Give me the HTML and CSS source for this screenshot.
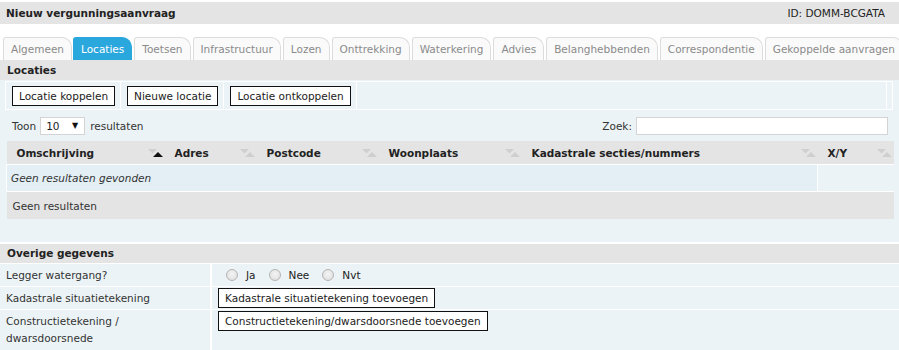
FILE: index.html
```html
<!DOCTYPE html>
<html>
<head>
<meta charset="utf-8">
<link rel="stylesheet" href="styles.css">
</head>
<body>
<div class="header">
  <span class="title">Nieuw vergunningsaanvraag</span>
  <span class="id">ID: DOMM-BCGATA</span>
</div>
<div class="tabs">
  <span class="tab">Algemeen</span>
  <span class="tab active">Locaties</span>
  <span class="tab">Toetsen</span>
  <span class="tab">Infrastructuur</span>
  <span class="tab">Lozen</span>
  <span class="tab">Onttrekking</span>
  <span class="tab">Waterkering</span>
  <span class="tab">Advies</span>
  <span class="tab">Belanghebbenden</span>
  <span class="tab">Correspondentie</span>
  <span class="tab">Gekoppelde aanvragen</span>
</div>
<div class="section-head">Locaties</div>
<div class="panel">
  <div class="btnrow">
    <div class="bcell"><span class="btn">Locatie koppelen</span></div>
    <div class="bcell"><span class="btn">Nieuwe locatie</span></div>
    <div class="bcell"><span class="btn">Locatie ontkoppelen</span></div>
    <div class="bcell grow"></div>
    <div class="bcell end"></div>
  </div>
  <div class="controls">
    <div class="toon">Toon <span class="select"><span>10</span><span class="arrow">&#9660;</span></span> resultaten</div>
    <div class="zoek">Zoek: <span class="input"></span></div>
  </div>
  <table class="grid">
    <thead>
      <tr>
        <th class="c1">Omschrijving<svg class="sort" width="16" height="8" viewBox="0 0 16 8"><polygon points="0,0 9,0 4.5,4.5" fill="#cfcfcf"/><polygon points="5,8 15,8 10,3" fill="#111"/></svg></th>
        <th class="c2">Adres<svg class="sort" width="16" height="8" viewBox="0 0 16 8"><polygon points="0,0 9,0 4.5,4.5" fill="#cfcfcf"/><polygon points="5,8 15,8 10,3" fill="#cfcfcf"/></svg></th>
        <th class="c3">Postcode<svg class="sort" width="16" height="8" viewBox="0 0 16 8"><polygon points="0,0 9,0 4.5,4.5" fill="#cfcfcf"/><polygon points="5,8 15,8 10,3" fill="#cfcfcf"/></svg></th>
        <th class="c4">Woonplaats<svg class="sort" width="16" height="8" viewBox="0 0 16 8"><polygon points="0,0 9,0 4.5,4.5" fill="#cfcfcf"/><polygon points="5,8 15,8 10,3" fill="#cfcfcf"/></svg></th>
        <th class="c5">Kadastrale secties/nummers<svg class="sort" width="16" height="8" viewBox="0 0 16 8"><polygon points="0,0 9,0 4.5,4.5" fill="#cfcfcf"/><polygon points="5,8 15,8 10,3" fill="#cfcfcf"/></svg></th>
        <th class="c6">X/Y<svg class="sort" width="16" height="8" viewBox="0 0 16 8"><polygon points="0,0 9,0 4.5,4.5" fill="#cfcfcf"/><polygon points="5,8 15,8 10,3" fill="#cfcfcf"/></svg></th>
      </tr>
    </thead>
    <tbody>
      <tr class="empty"><td colspan="5" class="emptycell">Geen resultaten gevonden</td><td class="blank"></td></tr>
      <tr class="foot"><td colspan="6">Geen resultaten</td></tr>
    </tbody>
  </table>
</div>
<div class="section-head overige">Overige gegevens</div>
<div class="form">
  <div class="frow">
    <div class="label">Legger watergang?</div>
    <div class="value radios">
      <span class="radio"></span><span class="rl">Ja</span>
      <span class="radio"></span><span class="rl">Nee</span>
      <span class="radio"></span><span class="rl">Nvt</span>
    </div>
  </div>
  <div class="frow">
    <div class="label">Kadastrale situatietekening</div>
    <div class="value"><span class="btn">Kadastrale situatietekening toevoegen</span></div>
  </div>
  <div class="frow tall">
    <div class="label">Constructietekening /<br>dwarsdoorsnede</div>
    <div class="value"><span class="btn">Constructietekening/dwarsdoorsnede toevoegen</span></div>
  </div>
</div>
</body>
</html>
```

FILE: styles.css
```css
html, body {
  margin: 0;
  padding: 0;
  background: #fff;
}
body {
  font-family: "DejaVu Sans", Verdana, sans-serif;
  font-size: 10.5px;
  color: #333;
  width: 899px;
  overflow: hidden;
}
.header {
  margin-top: 2px;
  height: 22px;
  background: #e4e4e4;
  display: flex;
  justify-content: space-between;
  align-items: center;
  padding: 0 14px 0 6px;
}
.title {
  font-weight: bold;
  color: #222;
}
.id {
  color: #222;
}
.tabs {
  margin-top: 13px;
  height: 23px;
  display: flex;
  padding-left: 3px;
  white-space: nowrap;
  overflow: hidden;
}
.tab {
  box-sizing: border-box;
  height: 23px;
  line-height: 22px;
  padding: 0 7px;
  margin-right: 2px;
  border: 1px solid #dcdcdc;
  border-bottom: none;
  border-radius: 3px 10px 0 0;
  background: #fafafa;
  color: #8a8a8a;
  font-size: 10.5px;
  flex: none;
}
.tab.active {
  background: #2aa7dd;
  border-color: #2aa7dd;
  color: #fff;
  margin-left: -1px;
}
.section-head {
  height: 20px;
  line-height: 20px;
  background: #e4e4e4;
  font-weight: bold;
  color: #222;
  padding-left: 7px;
}
.panel {
  background: #ecf3f6;
  padding: 1px 0 23px 0;
}
.btnrow {
  display: flex;
  margin: 0 6px 0 5px;
  height: 27px;
  border-top: 1px solid #fff;
  border-bottom: 1px solid #fff;
  border-left: 1px solid #fff;
}
.bcell {
  display: flex;
  align-items: center;
  padding: 0 5px 0 6px;
  border-right: 1px solid #fff;
}
.bcell.grow {
  flex: 1;
}
.bcell.end {
  width: 5px;
  padding: 0;
}
.btn {
  display: inline-block;
  box-sizing: border-box;
  height: 20px;
  line-height: 18px;
  border: 1px solid #111;
  background: #fff;
  padding: 0 6px;
  color: #222;
  white-space: nowrap;
}
.controls {
  display: flex;
  justify-content: space-between;
  align-items: center;
  margin: 6px 11px 0 12px;
  height: 19px;
}
.toon {
  display: flex;
  align-items: center;
}
.select {
  display: inline-flex;
  align-items: center;
  justify-content: space-between;
  box-sizing: border-box;
  width: 45px;
  height: 18px;
  margin: 0 5px 0 4px;
  padding: 0 6px 0 5px;
  background: #fff;
  border: 1px solid #d4d4d4;
  color: #222;
}
.arrow {
  font-size: 8px;
  color: #111;
}
.zoek {
  display: flex;
  align-items: center;
}
.input {
  display: inline-block;
  box-sizing: border-box;
  width: 252px;
  height: 18px;
  margin-left: 4px;
  background: #fff;
  border: 1px solid #d4d4d4;
}
.grid {
  margin: 6px 5px 0 6px;
  width: 888px;
  border-collapse: collapse;
  table-layout: fixed;
}
.grid th {
  background: #e4e4e4;
  height: 23px;
  text-align: left;
  font-weight: bold;
  color: #222;
  padding: 0 0 0 10px;
  position: relative;
  white-space: nowrap;
}
.sort {
  position: absolute;
  right: 1px;
  top: 8px;
}
.c1 { width: 148px; }
.c2 { width: 82px; }
.c3 { width: 112px; }
.c4 { width: 133px; }
.c5 { width: 286px; }
.grid td {
  padding: 0 0 0 4px;
}
.empty td {
  height: 26px;
  border-top: 1px solid #fff;
  border-bottom: 1px solid #fff;
}
.emptycell {
  background: #e3eff5;
  font-style: italic;
  border-left: 1px solid #fff;
  border-right: 1px solid #fff;
}
.empty td.blank {
  background: #ecf3f6;
}
.foot td {
  background: #e4e4e4;
  height: 27px;
  padding-left: 6px;
}
.overige {
  border-top: 2px solid #fff;
  height: 19px;
  line-height: 19px;
}
.form {
  background: #ecf3f6;
}
.frow {
  display: flex;
  border-top: 1px solid #fff;
  height: 22px;
}
.frow.tall {
  height: 40px;
}
.label {
  width: 204px;
  padding: 3px 0 0 6px;
  border-right: 2px solid #fff;
  line-height: 17px;
  color: #333;
}
.frow:first-child .label {
  line-height: 19px;
  padding-top: 2px;
}
.value {
  padding: 1px 0 0 6px;
  display: flex;
  align-items: flex-start;
}
.radios {
  align-items: center;
  padding: 0 0 0 14px;
}
.radio {
  display: inline-block;
  box-sizing: border-box;
  width: 12px;
  height: 12px;
  border-radius: 50%;
  border: 1px solid #b5b5b5;
  background: radial-gradient(circle at 50% 40%, #f4f4f4, #dcdcdc);
}
.rl {
  margin: 0 13px 0 8px;
  color: #222;
}
```
